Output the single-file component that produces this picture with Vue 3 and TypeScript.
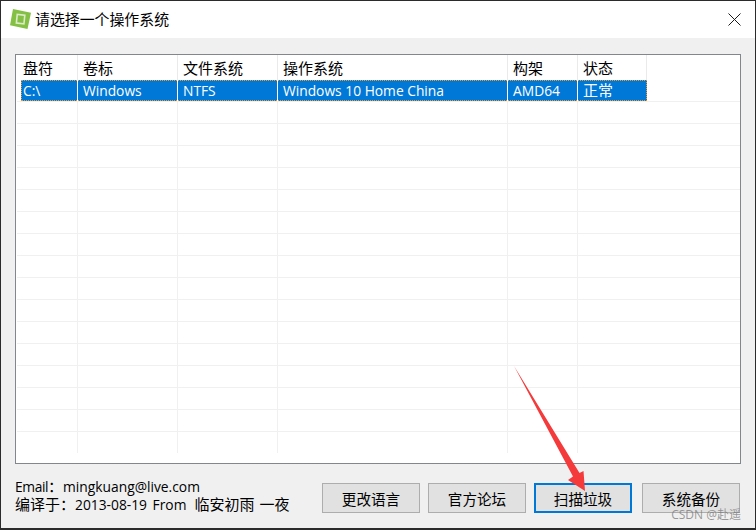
<script setup lang="ts">
const columns = ['盘符', '卷标', '文件系统', '操作系统', '构架', '状态']
const selected = [
  { text: 'C:\\', latin: true },
  { text: 'Windows', latin: true },
  { text: 'NTFS', latin: true },
  { text: 'Windows 10 Home China', latin: true },
  { text: 'AMD64', latin: true },
  { text: '正常', latin: false },
]
const emptyColumns = columns.slice(0, 5)
const emptyRows = Array.from({ length: 16 }, (_, i) => i)
const buttons = ['更改语言', '官方论坛', '扫描垃圾', '系统备份']
</script>

<template>
  <div class="window">
    <header class="titlebar">
      <svg class="logo" width="21" height="20" viewBox="0 0 21 20">
        <polygon points="3,0 21,3.7 17.5,20 0,16.2" fill="#84c044" />
        <rect x="6.8" y="5.8" width="7.6" height="8.6" fill="none" stroke="#dcebc8" stroke-width="1.6" transform="rotate(6 10.5 10)" />
      </svg>
      <span class="title">请选择一个操作系统</span>
      <svg class="close" width="13" height="13" viewBox="0 0 13 13">
        <path d="M0.5 0.5 L12.5 12.5 M12.5 0.5 L0.5 12.5" stroke="#1a1a1a" stroke-width="1" fill="none" />
      </svg>
    </header>

    <main class="client">
      <section class="list">
        <div class="rows">
          <div class="row head">
            <div v-for="c in columns" :key="c" class="cell">{{ c }}</div>
          </div>
          <div class="row selected">
            <div v-for="c in selected" :key="c.text" class="cell" :class="{ latin: c.latin }">{{ c.text }}</div>
          </div>
          <div v-for="r in emptyRows" :key="r" class="row empty">
            <div v-for="c in emptyColumns" :key="c" class="cell"></div>
          </div>
        </div>
      </section>

      <footer class="bottom">
        <div class="info">
          <div class="info-line"><span class="latin email">Email</span>：<span class="latin">mingkuang@live.com</span></div>
          <div class="info-line">编译于：<span class="latin date">2013-08-19 From</span><span class="gap"></span>临安初雨<span class="gap wide"></span>一夜</div>
        </div>
        <div class="buttons">
          <button
            v-for="(b, i) in buttons"
            :key="b"
            class="btn"
            :class="{ focused: i === 2 }"
          >{{ b }}</button>
        </div>
      </footer>
    </main>

    <svg class="arrow" width="756" height="530" viewBox="0 0 756 530">
      <polygon points="514,366 579.5,473 583.5,471 585,491 568,480 573,476.5" fill="#f43a3a" />
    </svg>
    <span class="watermark">CSDN @赴遥</span>
  </div>
</template>

<style>
html, body { margin: 0; padding: 0; background: #f0f0f0; }
</style>

<style scoped>
.window {
  position: relative;
  width: 756px;
  height: 530px;
  box-sizing: border-box;
  overflow: hidden;
  display: flex;
  flex-direction: column;
  border-top: 1px solid #2b2b2b;
  border-left: 1px solid #2b2b2b;
  border-right: 1px solid #2b2b2b;
  border-bottom: 2px solid #2b2b2b;
  background: #f0f0f0;
  color: #000;
  font-family: "Open Sans", "Noto Sans CJK SC", sans-serif;
  font-size: 15px;
}
.latin { font-size: 13.8px; }
.email { letter-spacing: -0.4px; }
.date { word-spacing: 2px; }
.titlebar {
  height: 37px;
  flex: none;
  background: #fff;
  display: flex;
  align-items: center;
  padding: 0 14px 0 9px;
}
.logo { flex: none; margin-right: 4px; margin-top: -1px; }
.title { flex: 1; font-size: 14.9px; line-height: 20px; margin-top: -1px; }
.close { flex: none; margin-top: -1px; }
.client {
  flex: 1;
  display: flex;
  flex-direction: column;
  padding: 16px 14px 0 14px;
}
.list {
  width: 726px;
  height: 410px;
  flex: none;
  box-sizing: border-box;
  border: 1px solid #82878c;
  background: #fff;
}
.rows {
  height: 406px;
  overflow: hidden;
  padding-left: 5px;
}
.row { display: flex; width: 626px; }
.cell {
  box-sizing: border-box;
  padding-left: 5px;
  white-space: nowrap;
  overflow: hidden;
}
.cell:nth-child(1) { width: 57px; padding-left: 2px; }
.cell:nth-child(2) { width: 100px; }
.cell:nth-child(3) { width: 100px; }
.cell:nth-child(4) { width: 230px; }
.cell:nth-child(5) { width: 70px; }
.cell:nth-child(6) { width: 69px; }
.head { height: 25px; line-height: 25px; }
.head .cell { border-right: 1px solid #eaeaea; padding-top: 1px; }
.selected {
  height: 21px;
  line-height: 21px;
  background: #0078d7;
  color: #fff;
  outline: 1px dotted #f59a23;
  outline-offset: -1px;
}
.selected .cell { border-right: 1px solid #fff; }
.selected .cell:last-child { border-right: 0; }
.empty {
  height: 22px;
  width: 723px;
  margin-left: -4px;
  padding-left: 4px;
  box-sizing: border-box;
  border-top: 1px solid #f0f0f0;
}
.empty .cell { border-right: 1px solid #f0f0f0; }
.bottom {
  flex: 1;
  display: flex;
  justify-content: space-between;
  padding-top: 11px;
}
.info { padding-top: 2px; }
.info-line { height: 18px; line-height: 18px; white-space: nowrap; }
.gap { display: inline-block; width: 8px; }
.gap.wide { width: 5px; }
.buttons {
  display: flex;
  gap: 8px;
  padding-top: 8px;
  margin-right: 1px;
  align-items: flex-start;
}
.btn {
  width: 98px;
  height: 30px;
  box-sizing: border-box;
  border: 1px solid #adadad;
  background: #e1e1e1;
  color: #000;
  font: inherit;
  font-size: 14.6px;
  padding: 0;
}
.btn.focused {
  border: 2px solid #0078d7;
  margin-right: 2px;
}
.arrow {
  position: absolute;
  left: -1px;
  top: -1px;
  pointer-events: none;
}
.watermark {
  position: absolute;
  right: 14px;
  bottom: 6px;
  font-size: 12px;
  line-height: 14px;
  color: rgba(120, 120, 120, 0.75);
}
</style>
